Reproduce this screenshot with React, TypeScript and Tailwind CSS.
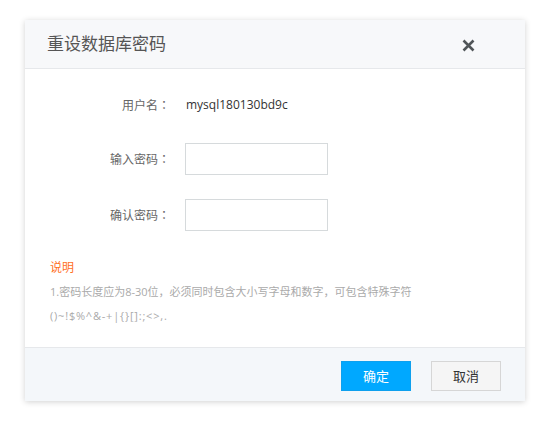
const symbols = "()~!$%^&-+|{}[]:;<>,.";

function Label({ text }: { text: string }) {
  return (
    <span className="w-[145px] text-right text-[12px] leading-[20px] text-[#666]">
      {text}
      <span style={{ fontFamily: '"Noto Sans CJK TC", sans-serif' }}>：</span>
    </span>
  );
}

export default function App() {
  const font = { fontFamily: '"Open Sans", "Noto Sans CJK SC", sans-serif' };
  return (
    <div className="w-[550px] h-[428px] bg-white pt-[20px] pl-[25px]" style={font}>
      <div className="w-[500px] bg-white shadow-[0_1px_6px_rgba(0,0,0,0.18)]">
        {/* header */}
        <div className="h-[49px] bg-[#f7f8fa] border-b border-[#e6e8eb] flex items-center justify-between pl-[22px] pr-[50px]">
          <span className="text-[17px] leading-[24px] text-[#555]">重设数据库密码</span>
          <svg width="13" height="13" viewBox="0 0 13 13" className="mt-[2px]">
            <path d="M1.5 1.5 L11.5 11.5 M11.5 1.5 L1.5 11.5" stroke="#505558" strokeWidth="2.6" strokeLinecap="butt" />
          </svg>
        </div>

        {/* body */}
        <div className="pt-[20px] pb-[19px]">
          <div className="flex items-center h-[32px]">
            <Label text="用户名" />
            <span className="ml-[16px] text-[12px] leading-[20px] text-[#333]">mysql180130bd9c</span>
          </div>
          <div className="flex items-center h-[32px] mt-[22px]">
            <Label text="输入密码" />
            <input type="password" className="ml-[15px] w-[143px] h-[32px] border border-[#d6dadc] bg-white outline-none" />
          </div>
          <div className="flex items-center h-[32px] mt-[24px]">
            <Label text="确认密码" />
            <input type="password" className="ml-[15px] w-[143px] h-[32px] border border-[#d6dadc] bg-white outline-none" />
          </div>

          <div className="mt-[25px] pl-[25px]">
            <div className="text-[12px] leading-[24px] text-[#ff6f1f]">说明</div>
            <div className="text-[11px] leading-[24px] text-[#aaa]">1.密码长度应为8-30位，必须同时包含大小写字母和数字，可包含特殊字符</div>
            <div className="text-[11px] leading-[24px] text-[#aaa] tracking-[0.8px]">{symbols}</div>
          </div>
        </div>

        {/* footer */}
        <div className="h-[54px] bg-[#f4f7fa] border-t border-[#e6e8eb] flex items-start justify-end pt-[13px] pr-[24px] gap-[20px]">
          <button className="w-[70px] h-[30px] bg-[#00a8ff] border border-[#0ea0ee] text-white text-[13px] leading-[28px]">确定</button>
          <button className="w-[70px] h-[30px] bg-[#f5f5f5] border border-[#d6d6d6] text-[#333] text-[13px] leading-[28px]">取消</button>
        </div>
      </div>
    </div>
  );
}
